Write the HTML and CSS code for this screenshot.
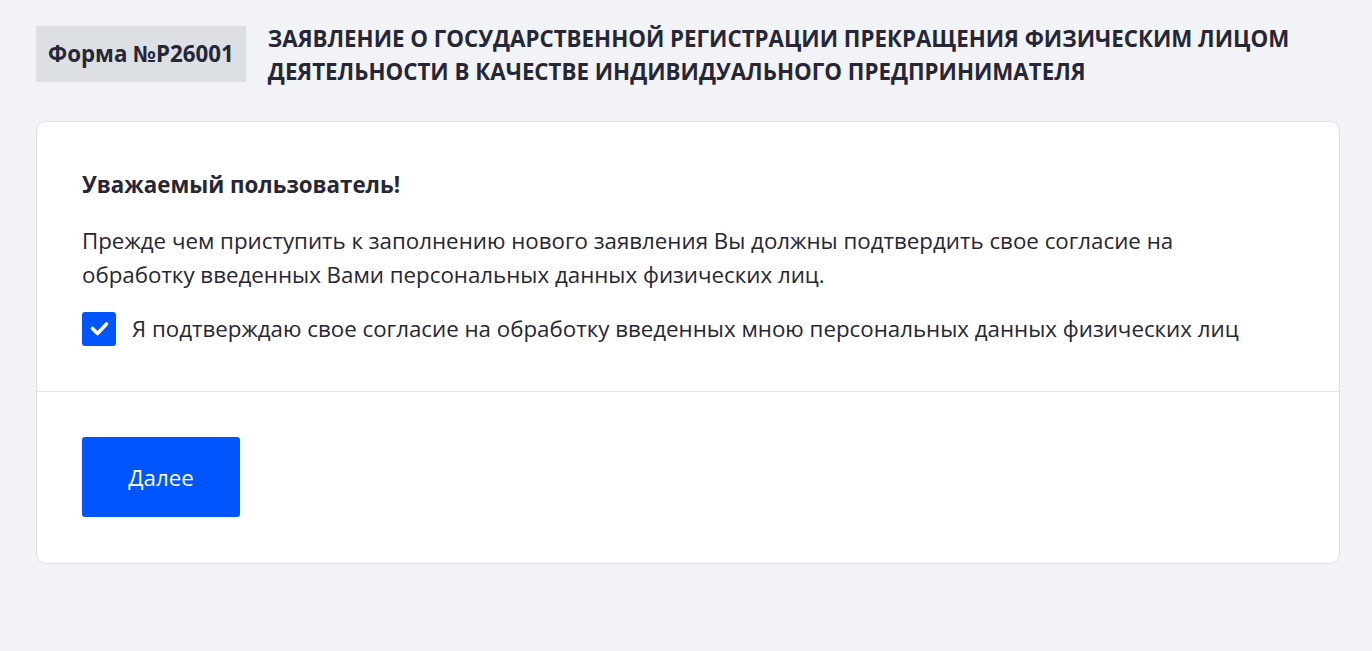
FILE: index.html
```html
<!DOCTYPE html>
<html lang="ru">
<head>
<meta charset="utf-8">
<title>Форма №Р26001</title>
<link rel="stylesheet" href="styles.css">
</head>
<body>
<div class="page">
  <header class="header">
    <div class="badge">Форма №Р26001</div>
    <h1 class="title">Заявление о государственной регистрации прекращения физическим лицом деятельности в качестве индивидуального предпринимателя</h1>
  </header>
  <section class="card">
    <div class="card-body">
      <h2 class="greeting">Уважаемый пользователь!</h2>
      <p class="text">Прежде чем приступить к заполнению нового заявления Вы должны подтвердить свое согласие на обработку введенных Вами персональных данных физических лиц.</p>
      <label class="consent">
        <span class="checkbox">
          <svg viewBox="0 0 34 34" width="34" height="34"><path d="M10.5 16.5l5 5 9-9.5" fill="none" stroke="#fff" stroke-width="3.6" stroke-linecap="round" stroke-linejoin="round"/></svg>
        </span>
        <span class="consent-text">Я подтверждаю свое согласие на обработку введенных мною персональных данных физических лиц</span>
      </label>
    </div>
    <div class="card-footer">
      <button class="btn" type="button">Далее</button>
    </div>
  </section>
</div>
</body>
</html>
```
FILE: styles.css
```css
* { box-sizing: border-box; }
html, body { margin: 0; padding: 0; }
body {
  background: #f2f3f7;
  font-family: "Open Sans", "Noto Sans", sans-serif;
  color: #262636;
  min-height: 651px;
}
.page {
  padding: 22px 32px 40px 36px;
}
.header {
  display: flex;
  align-items: flex-start;
  gap: 22px;
}
.badge {
  flex: none;
  margin-top: 4px;
  height: 56px;
  padding: 0 12px;
  background: #dcdfe4;
  font-size: 22.3px;
  font-weight: 700;
  line-height: 56px;
  color: #262636;
}
.title {
  margin: 0;
  font-size: 22.3px;
  font-weight: 700;
  line-height: 33px;
  text-transform: uppercase;
  color: #262636;
}
.card {
  margin-top: 33px;
  width: 1304px;
  background: #fff;
  border: 1px solid #dfe1e6;
  border-radius: 10px;
}
.card-body {
  padding: 46px 45px 45px;
  border-bottom: 1px solid #dfe1e6;
}
.greeting {
  margin: 0;
  font-size: 22.3px;
  font-weight: 700;
  line-height: 34px;
}
.text {
  max-width: 1160px;
  margin: 22px 0 0;
  font-size: 22.3px;
  line-height: 34px;
}
.consent {
  margin-top: 20px;
  display: flex;
  align-items: center;
  gap: 16px;
  font-size: 22.3px;
  line-height: 34px;
}
.checkbox {
  flex: none;
  width: 34px;
  height: 34px;
  border-radius: 3px;
  background: #0055ff;
  display: flex;
}
.card-footer {
  padding: 45px 45px 46px;
}
.btn {
  display: block;
  width: 158px;
  height: 80px;
  border: 0;
  border-radius: 3px;
  background: #0055ff;
  color: #fff;
  font-family: inherit;
  font-size: 22.3px;
  cursor: pointer;
}
```
